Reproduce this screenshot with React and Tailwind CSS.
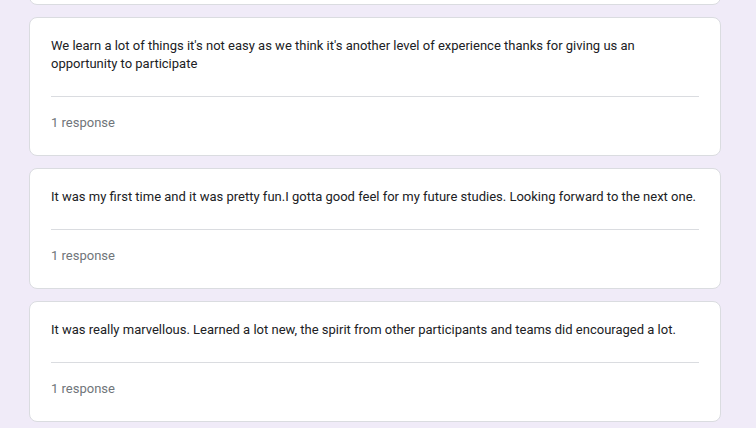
import React from 'react';

const responses = [
  "We learn a lot of things it's not easy as we think it's another level of experience thanks for giving us an opportunity to participate",
  'It was my first time and it was pretty fun.I gotta good feel for my future studies. Looking forward to the next one.',
  'It was really marvellous. Learned a lot new, the spirit from other participants and teams did encouraged a lot.',
];

const ResponseCard = ({ text }) => (
  <div className="bg-white border border-[#dadce0] rounded-lg px-[21px] pt-[19px] pb-[23px]">
    <p className="text-[13px] leading-[18px] text-[#202124]">{text}</p>
    <div className="mt-[23px] border-t border-[#dadce0]" />
    <div className="mt-[17px] text-[13px] leading-[18px] text-[#70757a]">1 response</div>
  </div>
);

const App = () => {
  return (
    <div
      className="min-h-[428px] h-[428px] overflow-hidden bg-[#f0ebf8]"
      style={{ fontFamily: 'Roboto, "Liberation Sans", sans-serif' }}
    >
      <div className="ml-[29px] w-[692px] flex flex-col gap-[12px]">
        <div className="h-[100px] -mt-[95px] bg-white border border-[#dadce0] rounded-lg" />
        {responses.map((r, i) => (
          <ResponseCard key={i} text={r} />
        ))}
      </div>
    </div>
  );
};

export default App;
